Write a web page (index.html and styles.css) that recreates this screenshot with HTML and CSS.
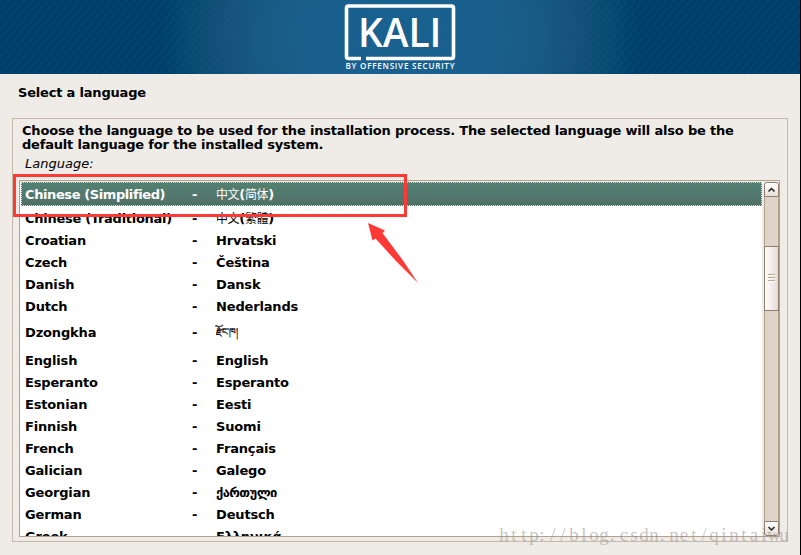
FILE: index.html
```html
<!DOCTYPE html>
<html lang="en">
<head>
<meta charset="utf-8">
<title>Select a language</title>
<link rel="stylesheet" href="styles.css">
</head>
<body>
<div class="installer">
  <header class="banner">
    <svg class="logo" width="130" height="74" viewBox="0 0 130 74" aria-label="Kali by Offensive Security">
      <path d="M26 58.5H13.5Q11.5 58.5 11.5 56.5V8Q11.5 6 13.5 6H116.500Q118.500 6 118.500 8V56.500Q118.500 58.500 116.500 58.500H31" fill="none" stroke="#fff" stroke-width="3.6"/>
      <text class="logo-name" x="23" y="46.500" textLength="83.500" lengthAdjust="spacingAndGlyphs">KALI</text>
      <text class="logo-by" x="10.500" y="69.300" textLength="109" lengthAdjust="spacing">BY OFFENSIVE SECURITY</text>
    </svg>
  </header>
  <h1>Select a language</h1>
  <main class="panel">
    <p class="question">Choose the language to be used for the installation process. The selected language will also be the<br>default language for the installed system.</p>
    <p class="label">Language:</p>
    <div class="list">
      <div class="rows">
        <div class="row selected"><span>Chinese (Simplified)</span><span>-</span><span><i>中文</i>(<i>简体</i>)</span></div>
        <div class="row tall"><span>Chinese (Traditional)</span><span>-</span><span><i>中文</i>(<i>繁體</i>)</span></div>
        <div class="row"><span>Croatian</span><span>-</span><span>Hrvatski</span></div>
        <div class="row"><span>Czech</span><span>-</span><span>Čeština</span></div>
        <div class="row"><span>Danish</span><span>-</span><span>Dansk</span></div>
        <div class="row"><span>Dutch</span><span>-</span><span>Nederlands</span></div>
        <div class="row dzongkha"><span>Dzongkha</span><span>-</span><span class="tibetan">རྫོང་ཁ།</span></div>
        <div class="row"><span>English</span><span>-</span><span>English</span></div>
        <div class="row"><span>Esperanto</span><span>-</span><span>Esperanto</span></div>
        <div class="row"><span>Estonian</span><span>-</span><span>Eesti</span></div>
        <div class="row"><span>Finnish</span><span>-</span><span>Suomi</span></div>
        <div class="row"><span>French</span><span>-</span><span>Français</span></div>
        <div class="row"><span>Galician</span><span>-</span><span>Galego</span></div>
        <div class="row"><span>Georgian</span><span>-</span><span class="georgian">ქართული</span></div>
        <div class="row"><span>German</span><span>-</span><span>Deutsch</span></div>
        <div class="row"><span>Greek</span><span>-</span><span>Ελληνικά</span></div>
      </div>
      <div class="scrollbar">
        <div class="step up"><svg width="13" height="13" viewBox="0 0 13 13"><path d="M3.500 8.500L6.500 5.500L9.500 8.500" fill="none" stroke="#222" stroke-width="1.500"/></svg></div>
        <div class="track"><div class="thumb"><b></b><b></b><b></b></div></div>
        <div class="step down"><svg width="13" height="13" viewBox="0 0 13 13"><path d="M3.500 5L6.500 8L9.500 5" fill="none" stroke="#222" stroke-width="1.500"/></svg></div>
      </div>
    </div>
  </main>
  <div class="highlight"></div>
  <svg class="arrow" width="60" height="70" viewBox="0 0 60 70"><path d="M8 3L25 10.500L22.500 13L43 40.500L58 63L36 41L15.500 18.500L12.500 20.500Z" fill="#ff3a36"/></svg>
  <svg class="watermark" width="300" height="26" viewBox="0 0 300 26"><text y="17" x="5 15 25 35 43 54 64 75 85 95 105 113 125 135 145 155 163 175 185 195 205 215 225 235 245 255 265 275 285">http://blog.csdn.net/qintaiwu</text></svg>
</div>
</body>
</html>
```
FILE: styles.css
```css
* { box-sizing: border-box; }
body { margin: 0; background: #000; }
.installer {
  position: relative;
  width: 800px;
  height: 555px;
  overflow: hidden;
  background: #efebe7;
  color: #000;
  font: bold 13px/14px "DejaVu Sans", "Noto Sans CJK SC", sans-serif;
}
.banner {
  display: flex;
  justify-content: center;
  height: 74px;
  background:
    repeating-linear-gradient(130deg, rgba(0,110,110,.14) 0 2px, transparent 3px 5px, rgba(0,110,110,.14) 6px),
    radial-gradient(circle 240px at 400px 37px, #1b6093 0, #1b5f90 35%, #1b5986 58%, #17507c 72%, #0b4a73 86%, #03416d 96%, #003c6c 100%);
}
.logo { display: block; }
.logo-name { font: 600 39.5px "Open Sans", sans-serif; fill: #fff; }
.logo-by { font: 600 8.1px "Open Sans", sans-serif; fill: #fff; }
h1 { margin: 12px 0 0 18px; height: 32px; font-size: 13px; line-height: 14px; letter-spacing: -.19px; }
.panel {
  width: 776px;
  height: 424px;
  margin-left: 12px;
  padding: 5px 7px 0 6px;
  border: 1px solid #c4b8a8;
}
.question { margin: 0 0 0 3px; white-space: nowrap; letter-spacing: -.19px; }
.label { margin: 5px 0 9px 6px; font-weight: normal; font-style: oblique; }
.list {
  display: flex;
  justify-content: space-between;
  width: 761px;
  height: 357px;
  padding: 1px 0 0 1px;
  overflow: hidden;
  border: 1px solid #b3a18e;
  background: #efebe7;
}
.rows { width: 742px; height: 354px; margin-left: -1px; padding-left: 1px; overflow: hidden; background: #fff; }
.row {
  display: grid;
  grid-template-columns: 167px 24px 1fr;
  align-items: center;
  height: 22px;
  padding-left: 4px;
  line-height: 20px;
  letter-spacing: -.16px;
  white-space: nowrap;
}
.row i { font: normal 12px/20px "Noto Sans CJK SC", sans-serif; letter-spacing: -.4px; }
.row.selected {
  height: 24px;
  padding: 1px 0 0 3px;
  border: 1px dotted #d4dfdc;
  background: linear-gradient(#52806f, #52786f 60%, #526f63);
  color: #fff;
}
.selected span:first-child { letter-spacing: -.4px; }
.tall { height: 24px; padding-top: 1px; }
.tall span:first-child { letter-spacing: -.28px; }
.dzongkha { height: 32px; padding-bottom: 2px; }
.tibetan { position: relative; top: -1px; font-weight: normal; font-size: 9.5px; letter-spacing: 0; -webkit-text-stroke: .25px #000; }
.georgian { letter-spacing: -.6px; }
.scrollbar { display: flex; flex-direction: column; width: 15px; height: 354px; }
.step {
  width: 15px;
  height: 15px;
  border: 1px solid #8f7e6d;
  background: linear-gradient(#fff, #e7dfda);
}
.step svg { display: block; }
.up { border-radius: 3px 3px 0 0; }
.down { border-radius: 0 0 3px 3px; }
.track {
  flex: 1;
  padding-top: 49px;
  border: solid #b3a18e;
  border-width: 0 1px;
  background: #dfd4c9;
}
.thumb {
  display: flex;
  flex-direction: column;
  align-items: center;
  justify-content: center;
  gap: 2px;
  width: 15px;
  height: 65px;
  margin-left: -1px;
  padding-bottom: 2px;
  border: 1px solid #8f7e6d;
  background: linear-gradient(90deg, #fff, #f2edea 50%, #e3dad5);
}
.thumb b { width: 7px; height: 1px; background: #b9a98f; box-shadow: 0 1px #fff; }
.highlight { position: absolute; left: 13px; top: 174px; width: 394px; height: 43px; border: 3px solid #ff3a36; }
.arrow { position: absolute; left: 360px; top: 220px; }
.watermark { position: absolute; left: 499px; top: 524px; }
.watermark text {
  fill: rgba(145,140,135,.5);
  font: normal 19px "Liberation Serif", serif;
  text-anchor: middle;
}
```
